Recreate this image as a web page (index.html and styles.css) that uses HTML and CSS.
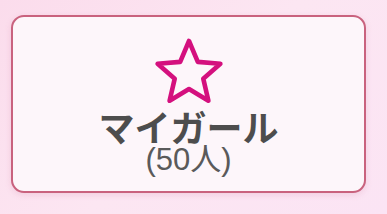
FILE: index.html
```html
<!DOCTYPE html>
<html lang="ja">
<head>
<meta charset="utf-8">
<link rel="stylesheet" href="styles.css">
</head>
<body>
<div class="page">
  <div class="card">
    <svg class="star" width="80" height="72" viewBox="0 0 80 72">
      <polygon points="40,5 48.82,25.86 71.38,27.8 54.27,42.64 59.4,64.7 40,53 20.6,64.7 25.73,42.64 8.62,27.8 31.18,25.86" fill="none" stroke="#d4107e" stroke-width="4.6" stroke-linejoin="round"/>
    </svg>
    <div class="title">マイガール</div>
    <div class="count">(50人)</div>
  </div>
</div>
</body>
</html>
```

FILE: styles.css
```css
html, body {
  margin: 0;
  padding: 0;
}
body {
  width: 387px;
  height: 214px;
  overflow: hidden;
  background: linear-gradient(135deg, #fbdcec 0%, #fce6f2 50%, #fbe4f4 100%);
  font-family: "Noto Sans CJK JP", "Noto Sans", sans-serif;
}
.page {
  padding: 15px 21px 0 11px;
}
.card {
  box-sizing: border-box;
  width: 355px;
  height: 178px;
  border: 2.5px solid #c9627e;
  border-radius: 13px;
  background: #fdf6fa;
  box-shadow: 0 2px 6px rgba(200, 100, 140, 0.18);
  display: flex;
  flex-direction: column;
  align-items: center;
  padding-top: 19px;
}
.star {
  display: block;
}
.title {
  font-size: 36px;
  font-weight: 700;
  color: #4d4d4d;
  line-height: 36px;
}
.count {
  font-size: 31px;
  color: #5a5a5a;
  line-height: 31px;
  font-family: "Liberation Sans", "Noto Sans CJK JP", sans-serif;
}
```
